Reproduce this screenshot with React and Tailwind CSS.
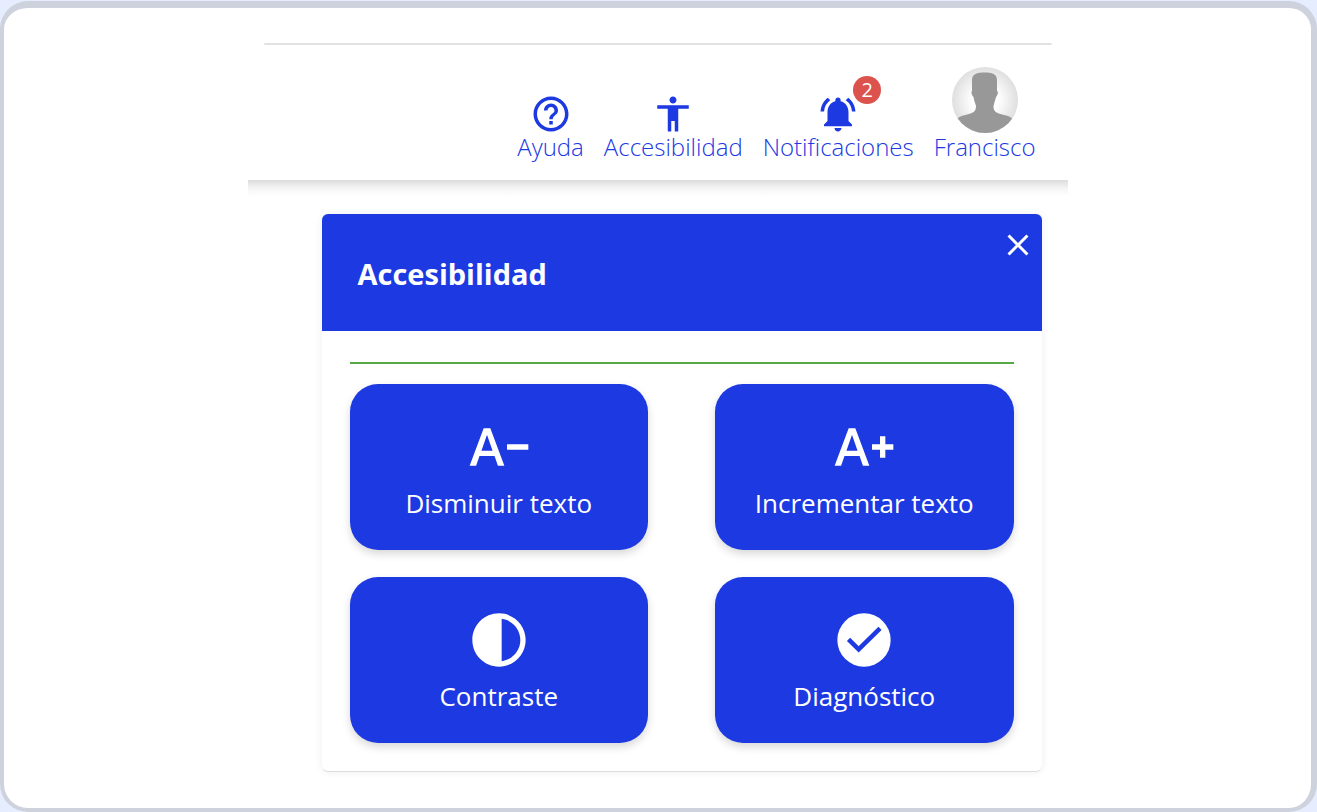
import {
  MdHelpOutline,
  MdAccessibility,
  MdNotificationsActive,
  MdClose,
  MdTextDecrease,
  MdTextIncrease,
  MdContrast,
} from "react-icons/md";

function CheckBadge({ className }) {
  return (
    <svg viewBox="0 0 24 24" className={className} aria-hidden="true">
      <circle cx="12" cy="12" r="10" fill="currentColor" />
      <path d="M6.2 11.8 10 15.5 18 7.6" fill="none" stroke="#1c39e2" strokeWidth="1.7" />
    </svg>
  );
}

const actions = [
  { label: "Disminuir texto", Icon: MdTextDecrease },
  { label: "Incrementar texto", Icon: MdTextIncrease },
  { label: "Contraste", Icon: MdContrast },
  { label: "Diagnóstico", Icon: CheckBadge },
];

function Avatar() {
  return (
    <svg viewBox="0 0 66 66" className="size-[66px]" aria-hidden="true">
      <defs>
        <radialGradient id="avatar-bg">
          <stop offset="0.4" stopColor="#ffffff" />
          <stop offset="1" stopColor="#dfdfdf" />
        </radialGradient>
        <clipPath id="avatar-clip">
          <circle cx="33" cy="33" r="33" />
        </clipPath>
      </defs>
      <circle cx="33" cy="33" r="33" fill="url(#avatar-bg)" />
      <path
        clipPath="url(#avatar-clip)"
        fill="#989898"
        d="M20 13C20 7 25 5.500 32.500 5.500S45 7 45 13v11c1.500.5 1 4-1 6-1 4-2 7-2.500 9 0 5 2 6.500 7 8 5 1.500 9 2 11 4l2 4-8 11H12L4 55l2-4c2-2 6-2.500 11-4 5-1.500 7-3 7-8-.5-2-2-5-2.500-9-2-2-2.500-5.500-1.500-6z"
      />
    </svg>
  );
}

function NavItem({ label, children }) {
  return (
    <a href="#" className="flex flex-col items-center">
      {children}
      <span className="leading-7">{label}</span>
    </a>
  );
}

export default function App() {
  return (
    <div className="min-h-screen bg-[#e6edff] pt-px font-['Open_Sans','Noto_Sans',sans-serif]">
      <div className="flex min-h-[811px] flex-col items-center rounded-[28px] border-4 border-t-[7px] border-r-[6px] border-[#ced2dd] bg-white pt-[35px] pb-9">
        <div className="flex w-full max-w-[820px] flex-col">
          <header className="relative">
            <div className="mx-4 h-[2px] rounded-full bg-[#e2e2e2]" />
            <nav className="flex items-end justify-end gap-5 pt-[22px] pr-8 pb-[19px] text-[24px] font-light text-[#1c39e2]">
              <NavItem label="Ayuda">
                <MdHelpOutline className="-mb-0.5 size-[42px]" />
              </NavItem>
              <NavItem label="Accesibilidad">
                <MdAccessibility className="-mb-0.5 size-[42px]" />
              </NavItem>
              <NavItem label="Notificaciones">
                <span className="relative -mb-0.5">
                  <MdNotificationsActive className="size-[42px]" />
                  <span className="absolute -top-[17px] -right-[22px] flex size-7 items-center justify-center rounded-full bg-[#dc524d] text-[20px] font-normal text-white">
                    2
                  </span>
                </span>
              </NavItem>
              <NavItem label="Francisco">
                <Avatar />
              </NavItem>
            </nav>
            <div className="absolute inset-x-0 top-full h-4 bg-linear-to-b from-[#dcdcdc] via-[#f4f4f4] to-white" />
          </header>

          <section className="mt-[34px] mr-[26px] ml-[74px] overflow-hidden rounded-md border-b border-[#dedede] shadow-[0_0_8px_#eeeeee]">
            <div className="relative flex h-[117px] items-center bg-[#1c39e2] px-9 pt-0.5 text-white">
              <h1 className="text-[29px] font-bold">Accesibilidad</h1>
              <button type="button" aria-label="Cerrar" className="absolute top-[13px] right-1.5">
                <MdClose className="size-9" />
              </button>
            </div>
            <div className="px-7 pt-[31px] pb-7">
              <hr className="border-t-2 border-[#55a844]" />
              <div className="mt-5 grid grid-cols-2 gap-x-[67px] gap-y-[27px]">
                {actions.map(({ label, Icon }) => (
                  <button
                    key={label}
                    type="button"
                    className="flex h-[166px] flex-col items-center justify-center rounded-[28px] bg-[#1c39e2] pt-2 text-[26px] text-white shadow-[0_4px_8px_#d8d8d8]"
                  >
                    <Icon className="size-16" />
                    <span className="leading-[48px]">{label}</span>
                  </button>
                ))}
              </div>
            </div>
          </section>
        </div>
      </div>
    </div>
  );
}
